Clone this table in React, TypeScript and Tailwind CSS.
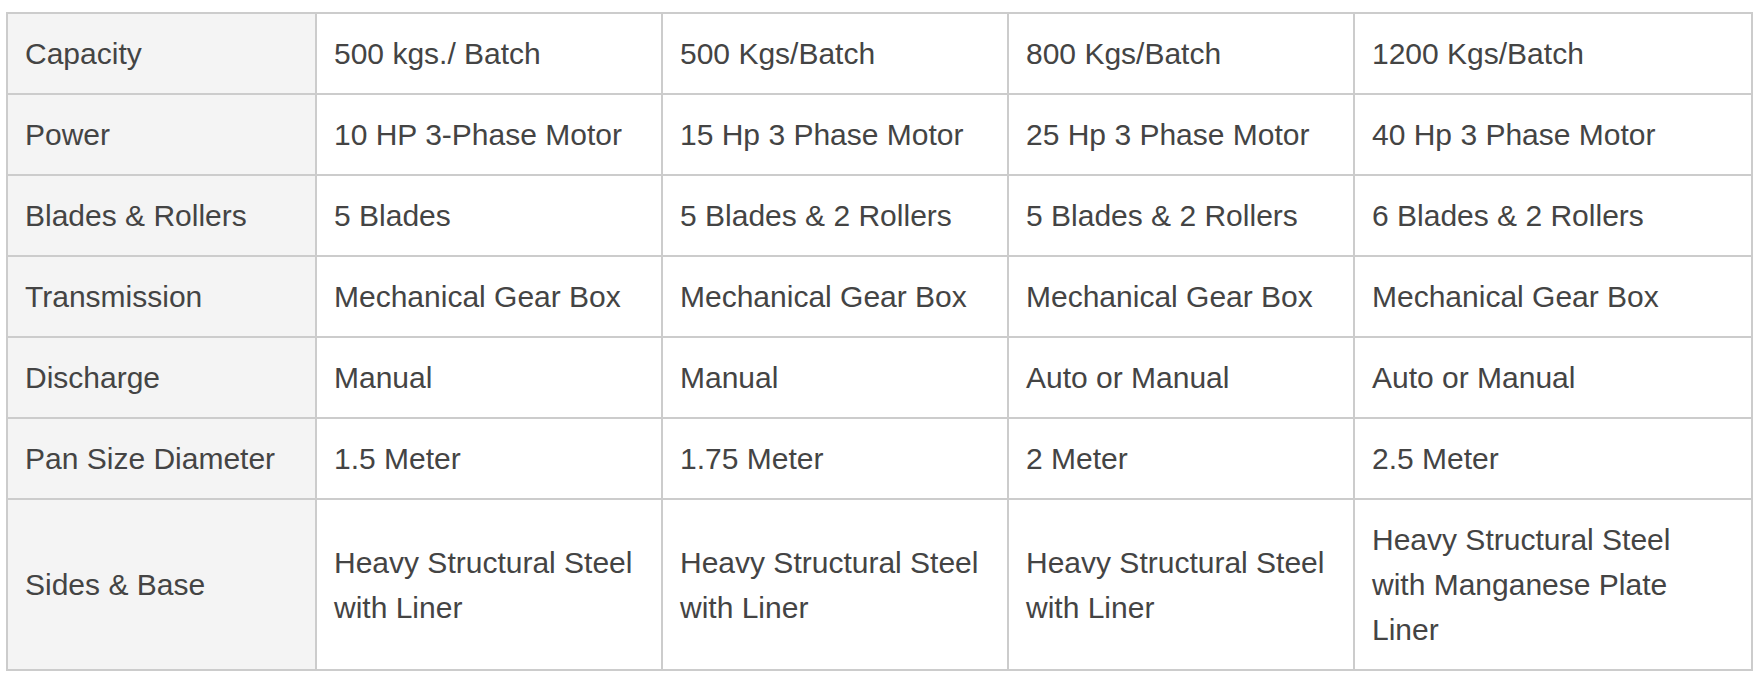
import React from "react";

const rows: string[][] = [
  ["Capacity", "500 kgs./ Batch", "500 Kgs/Batch", "800 Kgs/Batch", "1200 Kgs/Batch"],
  ["Power", "10 HP 3-Phase Motor", "15 Hp 3 Phase Motor", "25 Hp 3 Phase Motor", "40 Hp 3 Phase Motor"],
  ["Blades & Rollers", "5 Blades", "5 Blades & 2 Rollers", "5 Blades & 2 Rollers", "6 Blades & 2 Rollers"],
  ["Transmission", "Mechanical Gear Box", "Mechanical Gear Box", "Mechanical Gear Box", "Mechanical Gear Box"],
  ["Discharge", "Manual", "Manual", "Auto or Manual", "Auto or Manual"],
  ["Pan Size Diameter", "1.5 Meter", "1.75 Meter", "2 Meter", "2.5 Meter"],
  [
    "Sides & Base",
    "Heavy Structural Steel with Liner",
    "Heavy Structural Steel with Liner",
    "Heavy Structural Steel with Liner",
    "Heavy Structural Steel with Manganese Plate Liner",
  ],
];

export default function App() {
  return (
    <div className="bg-white w-[1761px] h-[692px] pt-[12px] pl-[6px]" style={{ fontFamily: '"Liberation Sans", Arial, sans-serif' }}>
      <table className="table-fixed border-collapse w-[1745px] text-[30px] leading-[45px] text-[#444]">
        <colgroup>
          <col className="w-[309px]" />
          <col className="w-[346px]" />
          <col className="w-[346px]" />
          <col className="w-[346px]" />
          <col className="w-[398px]" />
        </colgroup>
        <tbody>
          {rows.map((r, i) => (
            <tr key={i}>
              {r.map((c, j) => (
                <td
                  key={j}
                  className={
                    "border-2 border-[#cccccc] px-[17px] py-[17px] align-middle text-left font-normal " +
                    (j === 0 ? "bg-[#f4f4f4]" : "bg-white")
                  }
                >
                  {j === 4 ? <div className="max-w-[320px]">{c}</div> : c}
                </td>
              ))}
            </tr>
          ))}
        </tbody>
      </table>
    </div>
  );
}
